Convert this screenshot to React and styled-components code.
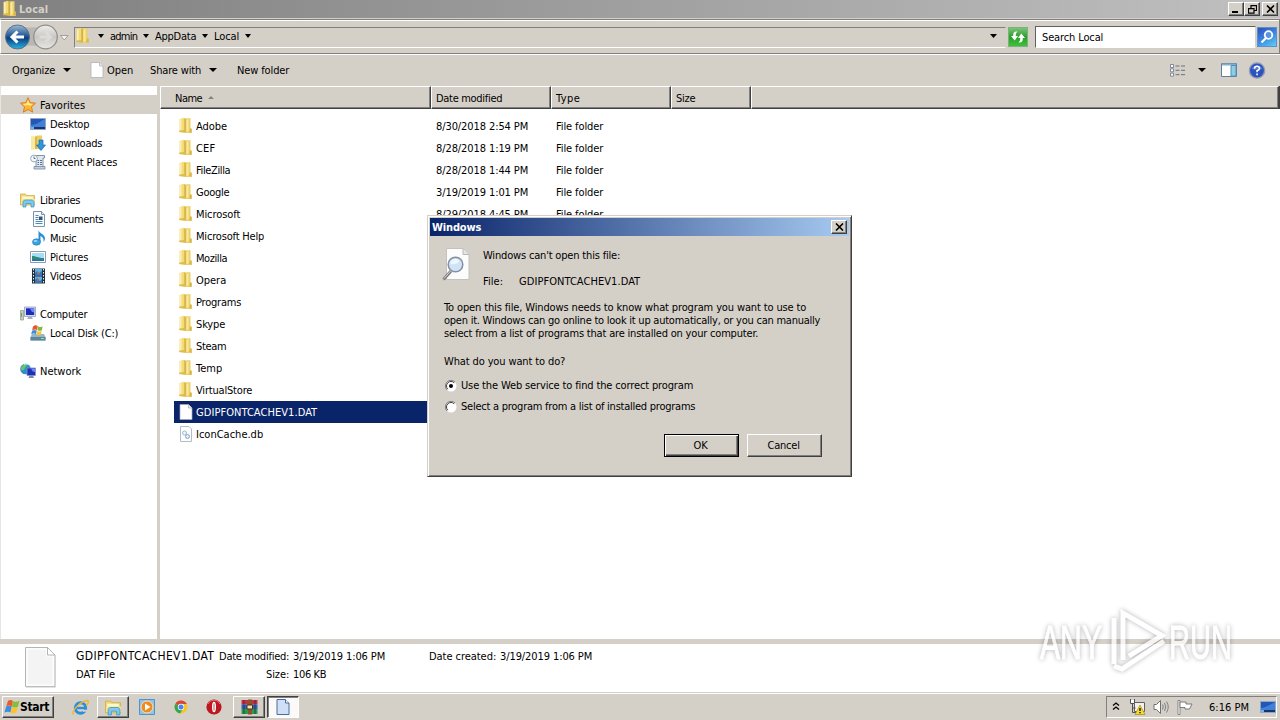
import React, { useLayoutEffect, useRef, useState } from 'react';
import styled, { createGlobalStyle, css } from 'styled-components';

//  STYLE
const GlobalStyle = createGlobalStyle`
  * {
    box-sizing: border-box;
  }
  body {
    margin: 0;
    overflow: hidden;
    background: #d4d0c8;
    color: #000;
    font-family: 'DejaVu Sans Condensed', 'DejaVu Sans', 'Noto Sans', sans-serif;
    font-size: 11px;
    font-stretch: condensed;
    line-height: 13px;
  }
  svg {
    display: block;
    flex: none;
  }
`;

const raised = css`
  border: 1px solid;
  border-color: #fff #404040 #404040 #fff;
  box-shadow: inset -1px -1px 0 #808080;
`;

const Desktop = styled.main`
  position: relative;
  display: flex;
  flex-direction: column;
  width: 1280px;
  height: 720px;
  overflow: hidden;
  background: #d4d0c8;
`;
const Text = styled.span`
  display: block;
  flex: none;
  white-space: pre;
  font-size: ${({ $size }) => $size || 11}px;
  font-weight: ${({ $bold }) => ($bold ? 'bold' : 'normal')};
`;
const TextSlot = styled.span`
  display: block;
  flex: none;
  width: ${({ $width }) => $width}px;
`;

const TitleBar = styled.header`
  display: flex;
  align-items: center;
  height: 18px;
  padding: 0 2px 0 2px;
  gap: 1px;
  color: #d4d0c8;
  background: linear-gradient(90deg, #808080, #c0c0c0);
`;
const TitleButtons = styled.div`
  display: flex;
  margin-left: auto;
`;
const TitleButton = styled.button`
  ${raised}
  display: flex;
  align-items: center;
  justify-content: center;
  width: 16px;
  height: 14px;
  padding: 0;
  margin-left: ${({ $gap }) => $gap || 0}px;
  color: #000;
  background: #d4d0c8;
`;

const AddressBar = styled.nav`
  display: flex;
  align-items: center;
  height: 35px;
  margin-top: 1px;
  padding: 1px 1px 0 3px;
  border: 1px solid;
  border-color: #808080 #808080 #808080 #fff;
  box-shadow: inset 0 1px 0 #fff, 0 1px 0 #fff;
`;
const NavButtons = styled.div`
  display: flex;
  align-items: center;
  width: 70px;
`;
const PathField = styled.div`
  display: flex;
  align-items: center;
  width: 932px;
  height: 21px;
  padding-bottom: 2px;
  border: 1px solid;
  border-color: #808080 #d4d0c8 #fff #808080;
`;
const Crumb = styled.div`
  display: flex;
  align-items: center;
  gap: 6px;
  margin-right: 6px;
`;
const RootArrow = styled.div`
  margin: 0 6px 0 7px;
`;
const PathArrow = styled.div`
  margin-left: auto;
  margin-right: 8px;
`;
const RefreshButton = styled.button`
  display: flex;
  align-items: center;
  justify-content: center;
  width: 20px;
  height: 20px;
  margin-left: 2px;
  padding: 0;
  border: 1px solid #7eb07c;
  background: linear-gradient(#7cc47a, #2b9d2b 50%, #3cc23a);
`;
const SearchField = styled.div`
  display: flex;
  align-items: center;
  width: 221px;
  height: 22px;
  margin-left: 7px;
  padding-left: 6px;
  border: 1px solid;
  border-color: #606060 #d4d0c8 #fff #606060;
  background: #fff;
`;
const SearchButton = styled.button`
  width: 20px;
  height: 20px;
  margin-left: 1px;
  padding: 0;
  border: 1px solid #5c8fd0;
  background: linear-gradient(150deg, #2c50b8, #3d86e0 50%, #5ad0f4);
`;

const ToolBar = styled.div`
  display: flex;
  align-items: center;
  height: 32px;
  padding: 0 14px 0 12px;
`;
const ToolItem = styled.div`
  display: flex;
  align-items: center;
  width: ${({ $width }) => $width}px;
  gap: ${({ $gap }) => $gap || 8}px;
`;
const ToolRight = styled.div`
  display: flex;
  align-items: center;
  margin-left: auto;
`;

const Body = styled.div`
  display: flex;
  height: 553px;
`;
const SideBar = styled.aside`
  width: 160px;
  padding-top: 9px;
  background: linear-gradient(90deg, #fff 156px, #d4d0c8 156px);
  border-left: 1px solid #e8e6e2;
`;
const SideRow = styled.div`
  display: flex;
  align-items: center;
  gap: 4px;
  height: 19px;
  margin-bottom: ${({ $last }) => ($last ? 19 : 0)}px;
  padding-left: ${({ $child }) => ($child ? 29 : 19)}px;
  background: ${({ $active }) => ($active ? '#d4d0c8' : 'none')};

  > ${TextSlot} {
    padding-top: 2px;
  }
`;

const FileList = styled.section`
  flex: 1;
  background: #fff;
`;
const HeaderRow = styled.div`
  display: flex;
  height: 23px;
  margin-bottom: 6px;
  border-right: 1px solid #404040;
  background: #d4d0c8;
`;
const HeaderCell = styled.div`
  display: flex;
  align-items: center;
  gap: 6px;
  width: ${({ $width }) => $width}px;
  padding-left: ${({ $pad }) => $pad || 4}px;
  border: 1px solid;
  border-color: #fff #404040 #404040 #fff;
  box-shadow: inset -1px -1px 0 #808080;

  > ${TextSlot} {
    padding-top: 1px;
  }
`;
const FileRow = styled.div`
  display: flex;
  align-items: center;
  width: 578px;
  height: 22px;
  margin-left: 14px;
  padding-left: 4px;
  color: ${({ $selected }) => ($selected ? '#fff' : '#000')};
  background: ${({ $selected }) => ($selected ? '#0a246a' : 'none')};
`;
const NameCell = styled.div`
  display: flex;
  align-items: center;
  gap: 2px;
  width: 258px;
`;
const DateCell = styled.div`
  width: 120px;
`;

const DetailsPane = styled.footer`
  display: flex;
  height: 53px;
  padding-left: 24px;
  border-top: 5px solid #d4d0c8;
  background: #fff;
`;
const DetailsText = styled.div`
  display: flex;
  flex-direction: column;
  gap: 4px;
  padding: 5px 0 0 19px;
`;
const DetailsLine = styled.div`
  display: flex;
  align-items: center;
  height: 14px;
`;
const DetailsKey = styled.div`
  display: flex;
  justify-content: flex-end;
  width: ${({ $width }) => $width}px;
  margin-right: 4px;
`;

const TaskBar = styled.footer`
  display: flex;
  align-items: center;
  height: 28px;
  margin-top: auto;
  padding: 1px 3px 0 2px;
  border-top: 1px solid #d4d0c8;
  box-shadow: inset 0 1px 0 #fff;
`;
const StartButton = styled.button`
  ${raised}
  display: flex;
  align-items: center;
  width: 52px;
  height: 22px;
  padding: 0 0 0 1px;
  gap: 0;
  color: #000;
  font-family: inherit;
  background: #d4d0c8;
`;
const TaskItem = styled.div`
  display: flex;
  align-items: center;
  justify-content: center;
  width: 32px;
  height: 22px;
  margin-left: ${({ $gap }) => $gap || 0}px;
  ${({ $open }) => $open && raised}
  ${({ $active }) =>
    $active &&
    css`
      border: 1px solid;
      border-color: #404040 #fff #fff #404040;
      box-shadow: inset 1px 1px 0 #808080;
      background: #fbfaf9;
    `}
`;
const Tray = styled.div`
  display: flex;
  align-items: center;
  width: 171px;
  height: 22px;
  margin-left: auto;
  padding-left: 5px;
  border: 1px solid;
  border-color: #808080 #fff #fff #808080;
`;
const TrayIcon = styled.div`
  width: ${({ $width }) => $width}px;
`;
const TrayDesktop = styled.div`
  margin-left: 11px;
`;

const Dialog = styled.section`
  position: absolute;
  left: 427px;
  top: 215px;
  width: 425px;
  height: 262px;
  padding: 2px;
  border: 1px solid;
  border-color: #d4d0c8 #404040 #404040 #d4d0c8;
  box-shadow: inset 1px 1px 0 #fff, inset -1px -1px 0 #808080;
  background: #d4d0c8;
`;
const DialogTitle = styled.header`
  display: flex;
  align-items: center;
  justify-content: space-between;
  height: 18px;
  padding: 0 2px;
  color: #fff;
  background: linear-gradient(90deg, #0a246a, #a6caf0);
`;
const DialogBody = styled.div`
  display: flex;
  flex-direction: column;
  padding: 11px 27px 0 14px;
`;
const FileInfo = styled.div`
  display: flex;
  height: 54px;
  margin-left: -2px;
`;
const FileInfoText = styled.div`
  display: flex;
  flex-direction: column;
  gap: 13px;
  padding: 2px 0 0 10px;
`;
const FileLine = styled.div`
  display: flex;
`;
const Question = styled.div`
  margin: 15px 0 7px;
`;
const Option = styled.label`
  display: flex;
  align-items: center;
  gap: 4px;
  height: 21px;
  padding-left: 1px;
`;
const Actions = styled.div`
  display: flex;
  justify-content: flex-end;
  gap: 8px;
  margin-top: 17px;
`;
const ActionButton = styled.button`
  display: flex;
  align-items: center;
  justify-content: center;
  width: 75px;
  height: 23px;
  padding: 0 2px 0 0;
  color: #000;
  font-family: inherit;
  background: #d4d0c8;
  border: 1px solid;
  border-color: ${({ $primary }) =>
    $primary ? '#000' : '#fff #404040 #404040 #fff'};
  box-shadow: ${({ $primary }) =>
    $primary
      ? 'inset 1px 1px 0 #fff, inset -1px -1px 0 #404040, inset -2px -2px 0 #808080'
      : 'inset -1px -1px 0 #808080'};
`;
const Watermark = styled.svg`
  position: absolute;
  left: 1030px;
  top: 600px;
  overflow: visible;
`;

//  Spreads a label over a fixed width by its letter spacing
const Label = ({ children, w, size, bold }) => {
  const ref = useRef(null);
  const [spacing, setSpacing] = useState(0);

  useLayoutEffect(() => {
    const range = document.createRange();
    range.selectNodeContents(ref.current);
    const natural = range.getBoundingClientRect().width;
    setSpacing((w + 0.2 - natural) / children.length);
  }, []);

  return (
    <TextSlot $width={w}>
      <Text
        ref={ref}
        $size={size}
        $bold={bold}
        style={{ letterSpacing: `${spacing}px` }}
      >
        {children}
      </Text>
    </TextSlot>
  );
};

//  ICONS
const Arrow = ({ width = 7 }) => (
  <svg width={width} height='4' viewBox='0 0 8 4' preserveAspectRatio='none'>
    <path d='M0 0h8L4 4z' />
  </svg>
);

const FolderIcon = () => (
  <svg width='16' height='18' viewBox='0 0 16 18'>
    <path d='M1.500 2L6 .8v13.500l-4.500 1z' fill='#f3dc78' />
    <path d='M2 2.400l1.500-.4v12l-1.500.4z' fill='#faefb4' />
    <path d='M6 .8l1.500 1V16L1 15l.5-1.500L6 13z' fill='#dfbd4c' />
    <path d='M7.500 1.200h5V11l1.200 1v4H7.500z' fill='#ecd068' />
    <path d='M8.500 3L10.500 1.800v12.500l-2 .9z' fill='#f8e99c' />
    <path d='M12.500 11l1.200 1v4L11 15z' fill='#d9b747' />
    <path d='M7.500 2v13.500' stroke='#cba73c' strokeWidth='.7' />
  </svg>
);

const PageIcon = () => (
  <svg width='16' height='16' viewBox='0 0 16 16'>
    <path d='M2 .5h8.500L14 4v11.500H2z' fill='#fff' stroke='#a3abb3' strokeWidth='.7' />
    <path d='M10.500.5V4H14' fill='#e9edf0' stroke='#a3abb3' strokeWidth='.7' />
  </svg>
);

const CacheIcon = () => (
  <svg width='16' height='16' viewBox='0 0 16 16'>
    <path d='M2.500.5H11L13.500 3v12.500h-11z' fill='#fff' stroke='#b4bcc6' />
    <circle cx='6.500' cy='7' r='2' fill='#eef5fc' stroke='#9dbbd9' />
    <circle cx='9.500' cy='10.500' r='2' fill='#e2eefa' stroke='#7fa8d3' />
  </svg>
);

const LibraryIcon = ({ size = 16 }) => (
  <svg width={size} height={size} viewBox='0 0 16 16'>
    <path d='M.5 2h5l1 1.500h8V13H.5z' fill='#f3d873' stroke='#c9a83e' strokeWidth='.7' />
    <path d='M2 4.500h11v3H2z' fill='#fdf6c8' />
    <path d='M1 7h14v5H1z' fill='#f7e58d' />
    <path d='M3 15V9.500l1.500-1.500h8L14 9.500V15h-3v-3.500H6V15z' fill='#7ccaf0' stroke='#3b8fc0' strokeWidth='.7' />
  </svg>
);

const ScreenIcon = () => (
  <svg width='16' height='16' viewBox='0 0 16 16'>
    <path d='M.5 2.500h15v11H.5z' fill='#2456b4' stroke='#8fa6c6' />
    <path d='M1 9C6 9 9 6 15 3v8H1z' fill='#3f80da' />
    <path d='M1 11h14v2H1z' fill='#1c3465' />
    <path d='M1 11h3v2H1z' fill='#6fb0f0' />
  </svg>
);

const icons = {
  star: (
    <svg width='16' height='16' viewBox='0 0 16 16'>
      <path
        d='M8 .7l2.200 4.900 5.300.6-4 3.600 1.200 5.400L8 12.500l-4.700 2.700 1.200-5.400-4-3.600 5.300-.6z'
        fill='#fdb62f'
        stroke='#d8781a'
        strokeWidth='.9'
      />
      <path d='M8 3l1.500 3.500 3.500.4-3 2L8 8l-3.500.5L3 7l3.500-.5z' fill='#ffe98b' />
    </svg>
  ),
  desktop: <ScreenIcon />,
  downloads: (
    <svg width='16' height='16' viewBox='0 0 16 16'>
      <path d='M1 1.500L7 .5V14l-6 1z' fill='#f9eaa0' />
      <path d='M7 .5h5V15l-5-1z' fill='#e9ce66' />
      <path d='M5 2l2-1v13H5z' fill='#d6b74c' />
      <path d='M9 5h4v5h2.500L11 15.500 6.500 10H9z' fill='#2f96e0' stroke='#1767ae' strokeWidth='.7' />
    </svg>
  ),
  recent: (
    <svg width='16' height='16' viewBox='0 0 16 16'>
      <path d='M5 1.500h9.500V4H13v9.500H6V4' fill='#dfe7ef' stroke='#7488a0' strokeWidth='.9' />
      <path d='M4 12.500h11V15H4z' fill='#c3d0dd' stroke='#7488a0' strokeWidth='.8' />
      <circle cx='4' cy='4.500' r='3.400' fill='#f6f9fc' stroke='#8496a8' strokeWidth='.8' />
      <path d='M4 2.500v2h1.500M7.500 6.500H9M10 6.500h2M7.500 8.500H9M10 8.500h2M7.500 10.500H9M10 10.500h2' stroke='#4a6684' strokeWidth='.9' fill='none' />
    </svg>
  ),
  libraries: <LibraryIcon />,
  documents: (
    <svg width='16' height='16' viewBox='0 0 16 16'>
      <path d='M3.500.5h8l3 3v12h-11z' fill='#f7fbfe' stroke='#7c93aa' />
      <path d='M5.500 4.500h3M5.500 6.500h3M5.500 8.500h3M5.500 10.500h7M5.500 12.500h7' stroke='#5588b8' />
      <path d='M9 5.500h3.500V9H9z' fill='#31557c' />
      <path d='M11.500.5v3h3' fill='#dde7f0' stroke='#7c93aa' />
    </svg>
  ),
  music: (
    <svg width='16' height='16' viewBox='0 0 16 16'>
      <path d='M8.500 0c.5 3.500 6.500 4 6.500 8.500 0 1.500-.7 2.800-1.500 3.500.6-3.500-1-5-3-6V12h-2z' fill='#2a8fd2' />
      <ellipse cx='6.500' cy='12' rx='4' ry='3.200' fill='#38a3e2' stroke='#1c75b5' strokeWidth='.6' />
      <ellipse cx='5.500' cy='11' rx='1.900' ry='1.100' fill='#9ad8f7' />
    </svg>
  ),
  pictures: (
    <svg width='16' height='16' viewBox='0 0 16 16'>
      <path d='M.5 2.500h15v11H.5z' fill='#fff' stroke='#8a9cae' />
      <path d='M2 4h12v8H2z' fill='#a6dcf4' />
      <path d='M2 7c4 0 6 2 12 2v3H2z' fill='#2f8a78' />
      <path d='M2 10.500h12V12H2z' fill='#2c6eb0' />
    </svg>
  ),
  videos: (
    <svg width='16' height='16' viewBox='0 0 16 16'>
      <path d='M2 .5h13v15H2z' fill='#20303e' />
      <path d='M5 1h7v6.500H5zM5 8.500h7V15H5z' fill='#5eb2e6' />
      <path d='M5 5l2-2 2 2 3-2v4.500H5zM5 12l2-2 3 3 2-2v4H5z' fill='#3a74b4' />
      <path d='M7 3l3 2-2 2zM8 10l2 2-3 1z' fill='#cf6d55' />
      <path d='M3.500 1v14M13.500 1v14' stroke='#e4ecf2' strokeDasharray='1.500 1.500' />
    </svg>
  ),
  computer: (
    <svg width='16' height='16' viewBox='0 0 16 16'>
      <path d='M.5 4.500h3V14h-3z' fill='#c4ccc0' stroke='#8a958a' strokeWidth='.7' />
      <path d='M1.500 7v4' stroke='#5ba85b' />
      <path d='M4.500 1h11v9.500h-11z' fill='#d7dce8' stroke='#8993ae' strokeWidth='.7' />
      <path d='M6 2.300h8.200V9H6z' fill='#1a2bc0' />
      <path d='M10 2.300h4.200V6C13 7 11 6 10 2.300z' fill='#6e86f0' />
      <path d='M8.500 10.500h3l1.500 2.500H7z' fill='#a7afc2' />
    </svg>
  ),
  disk: (
    <svg width='16' height='16' viewBox='0 0 16 16'>
      <path d='M2 9h12l1.500 3v3.500H.5V12z' fill='#9db4c4' />
      <path d='M.5 12h15v3.500H.5z' fill='#5d87a0' />
      <path d='M11 13.500h3' stroke='#7df07d' />
      <path d='M3 1.500c2-1.500 3-1.500 4.800-.5L7 5C5.500 4 4 4.500 2.200 5.300z' fill='#e8562a' />
      <path d='M8.200 1.500c1.500.8 3 .8 4.500-.3l-.8 4C10.500 6 9 6 7.400 5.300z' fill='#7ebb3e' />
      <path d='M2 5.800c2-1 3-1 4.800-.2L6 9.300c-1.500-1-3-.8-4.800 0z' fill='#3e8fd8' />
      <path d='M7.200 6c1.500.8 3 .8 4.500-.3L11 9.500c-2 .8-3 .8-4.600 0z' fill='#f9c52e' />
    </svg>
  ),
  network: (
    <svg width='16' height='16' viewBox='0 0 16 16'>
      <circle cx='5.500' cy='6' r='5.300' fill='#2b8fc8' />
      <path d='M2 3c2-2 4-2 5-1.500C7 4 5 4 4.500 6 4 8 2 7 1 7c0-2 0-3 1-4z' fill='#6cc46a' />
      <path d='M4 1.500c2-1 4-.5 5 .5' stroke='#cdeffc' fill='none' />
      <path d='M7 5h8.500v7.500H7z' fill='#1d30bd' stroke='#8793bb' strokeWidth='.8' />
      <path d='M11 5.500h4V9c-2 0-3-1-4-3.500z' fill='#6e88ef' />
      <path d='M9.500 12.500h3.500l1 2.500H8.500z' fill='#7e8aa8' />
    </svg>
  ),
};

const Flag = () => (
  <svg width='16' height='16' viewBox='0 0 16 16'>
    <path d='M4 1.800c2-1.200 3.500-1 4.900.1L7.800 7.400C6 6.300 4 6.300 2.300 7.200z' fill='#ea5b2c' />
    <path d='M9.100 2.200c2 1 4 .8 6.400-.5L14 7.700c-2 1-4 1-6.100 0z' fill='#85bd3d' />
    <path d='M2.100 7.500c2-1 4-1 5.600.2L6.400 13.500c-1.200-1-3.500-1-5.900 0z' fill='#3f8de0' />
    <path d='M7.900 8c2 1 4 .9 6 0l-1.400 5.600c-2 1-4 1-5.900.2z' fill='#fbc32d' />
  </svg>
);

const CloseGlyph = () => (
  <svg width='9' height='8' viewBox='0 0 9 8'>
    <path d='M1 .5l7 7M8 .5l-7 7' stroke='#000' strokeWidth='1.600' />
  </svg>
);

const Radio = ({ checked }) => (
  <svg width='12' height='12' viewBox='0 0 12 12'>
    <circle cx='6' cy='6' r='5.500' fill='#fff' />
    <path d='M2 10A5.500 5.500 0 0 1 10 2' stroke='#808080' fill='none' />
    <path d='M2.800 9.200A4.500 4.500 0 0 1 9.200 2.800' stroke='#404040' fill='none' />
    {checked && <circle cx='6' cy='6' r='2' fill='#000' />}
  </svg>
);

//  DATA
const tree = [
  { icon: 'star', text: 'Favorites', w: 45, active: true },
  { icon: 'desktop', text: 'Desktop', w: 39, child: true },
  { icon: 'downloads', text: 'Downloads', w: 52, child: true },
  { icon: 'recent', text: 'Recent Places', w: 67, child: true, last: true },
  { icon: 'libraries', text: 'Libraries', w: 40 },
  { icon: 'documents', text: 'Documents', w: 53, child: true },
  { icon: 'music', text: 'Music', w: 26, child: true },
  { icon: 'pictures', text: 'Pictures', w: 38, child: true },
  { icon: 'videos', text: 'Videos', w: 31, child: true, last: true },
  { icon: 'computer', text: 'Computer', w: 47 },
  { icon: 'disk', text: 'Local Disk (C:)', w: 68, child: true, last: true },
  { icon: 'network', text: 'Network', w: 41 },
];

const files = [
  { name: 'Adobe', w: 31, date: '8/30/2018 2:54 PM' },
  { name: 'CEF', w: 19, date: '8/28/2018 1:19 PM' },
  { name: 'FileZilla', w: 34, date: '8/28/2018 1:44 PM' },
  { name: 'Google', w: 33, date: '3/19/2019 1:01 PM' },
  { name: 'Microsoft', w: 44, date: '8/29/2018 4:45 PM' },
  { name: 'Microsoft Help', w: 68 },
  { name: 'Mozilla', w: 31 },
  { name: 'Opera', w: 30 },
  { name: 'Programs', w: 45 },
  { name: 'Skype', w: 29 },
  { name: 'Steam', w: 30 },
  { name: 'Temp', w: 26 },
  { name: 'VirtualStore', w: 56 },
  { name: 'GDIPFONTCACHEV1.DAT', w: 121, icon: <PageIcon />, selected: true },
  { name: 'IconCache.db', w: 67, icon: <CacheIcon /> },
];

const crumbs = [
  { text: 'admin', w: 27 },
  { text: 'AppData', w: 41 },
  { text: 'Local', w: 25 },
];

//  SECTIONS
const Navigation = () => (
  <AddressBar>
    <NavButtons>
      <svg width='66' height='28' viewBox='0 0 66 28'>
        <defs>
          <linearGradient id='back' x1='0' y1='0' x2='0' y2='1'>
            <stop offset='0' stopColor='#9db9d3' />
            <stop offset='.45' stopColor='#245a94' />
            <stop offset='.55' stopColor='#0b3f7c' />
            <stop offset='1' stopColor='#25b5ea' />
          </linearGradient>
          <linearGradient id='forward' x1='0' y1='0' x2='0' y2='1'>
            <stop offset='0' stopColor='#efeeec' />
            <stop offset='.5' stopColor='#c9c7c3' />
            <stop offset='1' stopColor='#e8e7e4' />
          </linearGradient>
        </defs>
        <path d='M10 3Q27 6 44 3v21Q27 21 10 24z' fill='#b9b7b3' />
        <circle cx='13.500' cy='14' r='12' fill='url(#back)' stroke='#5b7187' />
        <path d='M13.500 8.500L8 14l5.500 5.500M8.500 14H20' stroke='#fff' strokeWidth='3' fill='none' />
        <circle cx='41.500' cy='14' r='11.800' fill='url(#forward)' stroke='#92908c' strokeWidth='1.300' />
        <path d='M41.500 9l5 5-5 5M35.500 14H46' stroke='#dddbd7' strokeWidth='3' fill='none' />
        <path d='M56.500 12.500h7.500l-3.700 4.500z' fill='#f4f3f1' stroke='#908e8a' strokeWidth='.8' />
      </svg>
    </NavButtons>
    <PathField>
      <FolderIcon />
      <RootArrow>
        <Arrow width={6} />
      </RootArrow>
      {crumbs.map(({ text, w }) => (
        <Crumb key={text}>
          <Label w={w}>{text}</Label>
          <Arrow width={6} />
        </Crumb>
      ))}
      <PathArrow>
        <Arrow />
      </PathArrow>
    </PathField>
    <RefreshButton>
      <svg width='18' height='16' viewBox='0 0 18 16'>
        <path d='M8.500 2.500C5 2 4 4 4.200 7H2l3.700 4.500L9 7H6.800C6.700 5 7 4 8.500 2.500z' fill='#fff' />
        <path d='M9.500 13.500c3.500.5 4.500-1.500 4.300-4.500H16l-3.700-4.500L9 9h2.200c.1 2-.2 3-1.700 4.500z' fill='#fff' />
      </svg>
    </RefreshButton>
    <SearchField>
      <Label w={61}>Search Local</Label>
    </SearchField>
    <SearchButton>
      <svg width='18' height='18' viewBox='0 0 18 18'>
        <circle cx='10.500' cy='7' r='3.800' fill='#5b95e2' stroke='#fff' strokeWidth='1.800' />
        <path d='M8 10l-4.500 4.500' stroke='#fff' strokeWidth='2.200' />
      </svg>
    </SearchButton>
  </AddressBar>
);

const Tools = () => (
  <ToolBar>
    <ToolItem $width={77}>
      <Label w={43}>Organize</Label>
      <Arrow width={8} />
    </ToolItem>
    <ToolItem $width={61} $gap={2}>
      <PageIcon />
      <Label w={26}>Open</Label>
    </ToolItem>
    <ToolItem $width={87}>
      <Label w={51}>Share with</Label>
      <Arrow width={8} />
    </ToolItem>
    <Label w={52}>New folder</Label>
    <ToolRight>
      <ToolItem $width={51} $gap={12}>
        <svg width='16' height='13' viewBox='0 0 16 13'>
          <path d='M.5.500h3v3h-3zM.5 4.800h3v3h-3zM.5 9.200h3v3h-3z' fill='#fff' stroke='#7d8894' />
          <path d='M5.500 2h4M11 2h4M5.500 6.300h4M11 6.300h4M5.500 10.700h4M11 10.700h4' stroke='#68717c' />
        </svg>
        <Arrow width={8} />
      </ToolItem>
      <ToolItem $width={27}>
        <svg width='16' height='14' viewBox='0 0 16 14'>
          <path d='M.5.500h15v13H.5z' fill='#fff' stroke='#5f809c' />
          <path d='M1 1.500h14' stroke='#86acc8' strokeWidth='2' />
          <path d='M10 2.500h5V13h-5z' fill='#93cbe6' stroke='#4a92b8' />
        </svg>
      </ToolItem>
      <svg width='18' height='17' viewBox='0 0 18 17'>
        <circle cx='9' cy='8.500' r='7.600' fill='#2b52bd' stroke='#8f9bb8' strokeWidth='1.400' />
        <path d='M3.500 7a6 6 0 0 1 11 0q-5 2-11 0z' fill='#5377d4' />
        <path d='M6.500 6.700q0-2.400 2.500-2.400t2.500 2.200Q11.500 8 9.100 8.700v1.500M9.100 11.500v1.800' stroke='#fff' strokeWidth='1.600' fill='none' />
      </svg>
    </ToolRight>
  </ToolBar>
);

const Files = () => (
  <FileList>
    <HeaderRow>
      <HeaderCell $width={271} $pad={14}>
        <Label w={27}>Name</Label>
        <svg width='6' height='4' viewBox='0 0 6 4'>
          <path d='M0 3l3-3 3 3z' fill='#848284' />
        </svg>
      </HeaderCell>
      <HeaderCell $width={120}>
        <Label w={66}>Date modified</Label>
      </HeaderCell>
      <HeaderCell $width={120}>
        <Label w={24}>Type</Label>
      </HeaderCell>
      <HeaderCell $width={80}>
        <Label w={19}>Size</Label>
      </HeaderCell>
      <HeaderCell $width={528} />
    </HeaderRow>
    {files.map(({ name, w, date, icon, selected }) => (
      <FileRow key={name} $selected={selected}>
        <NameCell>
          {icon || <FolderIcon />}
          <Label w={w}>{name}</Label>
        </NameCell>
        {date && (
          <>
            <DateCell>
              <Label w={92}>{date}</Label>
            </DateCell>
            <Label w={47}>File folder</Label>
          </>
        )}
      </FileRow>
    ))}
  </FileList>
);

const Details = () => (
  <DetailsPane>
    <svg width='33' height='44' viewBox='0 -2 33 44'>
      <path d='M1.500 1.500h22l7.500 7.500v31.500H1.500z' fill='#f8f8f8' stroke='#b4b4b4' />
      <path d='M3 3h19.500v7H29v29H3z' fill='#f4f4f4' stroke='#fff' />
      <path d='M23.500 1.500V9H31z' fill='#fff' stroke='#b4b4b4' />
      <path d='M2 41.200h29.500V10' stroke='#d5d5d5' fill='none' />
    </svg>
    <DetailsText>
      <DetailsLine>
        <Label w={138} size={12}>
          GDIPFONTCACHEV1.DAT
        </Label>
        <DetailsKey $width={75}>
          <Label w={70}>Date modified:</Label>
        </DetailsKey>
        <Label w={92}>3/19/2019 1:06 PM</Label>
        <DetailsKey $width={111}>
          <Label w={67}>Date created:</Label>
        </DetailsKey>
        <Label w={92}>3/19/2019 1:06 PM</Label>
      </DetailsLine>
      <DetailsLine>
        <Label w={39}>DAT File</Label>
        <DetailsKey $width={174}>
          <Label w={23}>Size:</Label>
        </DetailsKey>
        <Label w={33}>106 KB</Label>
      </DetailsLine>
    </DetailsText>
  </DetailsPane>
);

const Tasks = () => (
  <TaskBar>
    <StartButton>
      <Flag />
      <Label w={29} size={12} bold>
        Start
      </Label>
    </StartButton>
    <TaskItem $gap={10}>
      <svg width='17' height='17' viewBox='0 0 17 17'>
        <circle cx='8.500' cy='9' r='5.200' fill='none' stroke='#2d8fda' strokeWidth='3' />
        <path d='M5 9h9' stroke='#2d8fda' strokeWidth='2.400' />
        <path d='M10 10.800h6v2h-5z' fill='#d4d0c8' />
        <path d='M1.500 15.500C-1 12 9 2 15.500 1.500c2 1 0 4-1 5' stroke='#f2b72b' strokeWidth='1.400' fill='none' />
      </svg>
    </TaskItem>
    <TaskItem $gap={1} $open>
      <LibraryIcon size={17} />
    </TaskItem>
    <TaskItem $gap={2}>
      <svg width='16' height='16' viewBox='0 0 16 16'>
        <path d='M.5.500h15v15H.5z' fill='#8cc4ec' stroke='#4d94c9' />
        <circle cx='8' cy='8' r='6' fill='#f28a1c' stroke='#fde0b2' />
        <path d='M6 4.500v7l5.500-3.500z' fill='#fff' />
      </svg>
    </TaskItem>
    <TaskItem $gap={2}>
      <svg width='14' height='14' viewBox='0 0 14 14'>
        <circle cx='7' cy='7' r='6.500' fill='#f6c526' />
        <path d='M7 7L1.400 3.700A6.500 6.500 0 0 1 12.800 4H7z' fill='#dc4437' />
        <path d='M7 7L1.400 3.700A6.500 6.500 0 0 0 6 13.400L9 9z' fill='#35a556' />
        <circle cx='7' cy='7' r='3.200' fill='#fff' />
        <circle cx='7' cy='7' r='2.500' fill='#4686ee' />
      </svg>
    </TaskItem>
    <TaskItem $gap={1}>
      <svg width='16' height='16' viewBox='0 0 16 16'>
        <circle cx='8' cy='8' r='7.600' fill='#bd1720' />
        <path d='M2 5a6.500 6.500 0 0 1 12 0' stroke='#ea7377' fill='none' />
        <ellipse cx='8' cy='8' rx='2' ry='5.300' fill='#fff' />
        <ellipse cx='8' cy='8' rx='.4' ry='4' fill='#a5222a' />
      </svg>
    </TaskItem>
    <TaskItem $gap={3} $open>
      <svg width='17' height='16' viewBox='0 0 17 16'>
        <path d='M.5 1h16v4.500H.5z' fill='#c2323f' />
        <path d='M.5 5.500h16V10H.5z' fill='#2f5fc0' />
        <path d='M.5 10h16v5H.5z' fill='#2c9a48' />
        <path d='M7 .5h4v15H7z' fill='#8d5130' />
        <path d='M6 6h5.500v4H6z' fill='#f2e2aa' stroke='#4b3018' />
        <path d='M3 1v14M14 1v14' stroke='#2a2440' strokeWidth='.7' />
      </svg>
    </TaskItem>
    <TaskItem $gap={2} $active>
      <svg width='14' height='16' viewBox='0 0 14 16'>
        <path d='M1 .5h8.500L13 4v11.500H1z' fill='#cfe0f6' stroke='#4a6ca0' />
        <path d='M9.500.5V4H13' fill='#fff' stroke='#4a6ca0' />
      </svg>
    </TaskItem>
    <Tray>
      <TrayIcon $width={17}>
        <svg width='8' height='11' viewBox='0 0 8 11'>
          <path d='M1 3.500l3-2.500 3 2.500M1 7.500L4 5l3 2.500' stroke='#000' strokeWidth='1.300' fill='none' />
        </svg>
      </TrayIcon>
      <TrayIcon $width={24}>
        <svg width='17' height='16' viewBox='0 0 17 16'>
          <path d='M5.500 3.500h10v9h-10z' fill='#f2f2f2' stroke='#606060' />
          <path d='M1 1h5v4H1z' fill='#fff' />
          <path d='M1.500 0v4.500h4V0M3.500 4.500v9h6M3.500 9h3' stroke='#505050' fill='none' />
          <path d='M11 6l5 9.500H6z' fill='#f7dc2b' stroke='#a58a12' strokeWidth='.7' />
          <path d='M11 9v3M11 13v1.300' stroke='#000' strokeWidth='1.300' />
        </svg>
      </TrayIcon>
      <TrayIcon $width={24}>
        <svg width='18' height='16' viewBox='0 0 18 16'>
          <path d='M1 5.500h2.500l4-4v13l-4-4H1z' fill='#fff' stroke='#707070' />
          <path d='M9.500 5.500q1.500 2.500 0 5M11.500 4q2.500 4 0 8M13.500 2.500q3.500 5.500 0 11' stroke='#808080' fill='none' />
        </svg>
      </TrayIcon>
      <TrayIcon $width={32}>
        <svg width='16' height='15' viewBox='0 0 16 15'>
          <path d='M1 .5h2V14.500H1z' fill='#fff' stroke='#707070' strokeWidth='.8' />
          <path d='M3 2h6v2h6l-2.500 5H8V7.500H3z' fill='#fff' stroke='#707070' strokeWidth='.9' />
        </svg>
      </TrayIcon>
      <Label w={40}>6:16 PM</Label>
      <TrayDesktop>
        <ScreenIcon />
      </TrayDesktop>
    </Tray>
  </TaskBar>
);

const OpenDialog = () => (
  <Dialog>
    <DialogTitle>
      <Label w={49} bold>
        Windows
      </Label>
      <TitleButton>
        <CloseGlyph />
      </TitleButton>
    </DialogTitle>
    <DialogBody>
      <FileInfo>
        <svg width='31' height='36' viewBox='0 0 31 36'>
          <path d='M4.500 1.500H21l6 6v25H4.500z' fill='#fcfcfc' stroke='#c4c2be' />
          <path d='M21 1.500v6h6' fill='#e4e4e4' stroke='#b8b8b8' />
          <path d='M9 24l-7.500 8.500' stroke='#7d7d80' strokeWidth='3' />
          <path d='M9 23.500L2 31.500' stroke='#d4d4d8' />
          <circle cx='13.500' cy='17.500' r='7.300' fill='#cfe3f8' stroke='#84909e' strokeWidth='1.500' />
          <path d='M8.500 17a5 5 0 0 1 9-3q-3 4-9 3z' fill='#eff7fe' />
        </svg>
        <FileInfoText>
          <Label w={137}>Windows can't open this file:</Label>
          <FileLine>
            <TextSlot $width={36}>
              <Label w={20}>File:</Label>
            </TextSlot>
            <Label w={121}>GDIPFONTCACHEV1.DAT</Label>
          </FileLine>
        </FileInfoText>
      </FileInfo>
      <Label w={362}>
        To open this file, Windows needs to know what program you want to use to
      </Label>
      <Label w={376}>
        open it. Windows can go online to look it up automatically, or you can manually
      </Label>
      <Label w={314}>
        select from a list of programs that are installed on your computer.
      </Label>
      <Question>
        <Label w={121}>What do you want to do?</Label>
      </Question>
      <Option>
        <Radio checked />
        <Label w={232}>Use the Web service to find the correct program</Label>
      </Option>
      <Option>
        <Radio />
        <Label w={234}>Select a program from a list of installed programs</Label>
      </Option>
      <Actions>
        <ActionButton $primary>
          <Label w={14}>OK</Label>
        </ActionButton>
        <ActionButton>
          <Label w={32}>Cancel</Label>
        </ActionButton>
      </Actions>
    </DialogBody>
  </Dialog>
);

const Brand = () => (
  <Watermark width='220' height='84' viewBox='0 0 220 84'>
    <g filter='drop-shadow(0 0 2.500px rgba(0, 0, 0, .4))' opacity='.75'>
      <g
        fill='#fff'
        stroke='#fff'
        fontFamily='Liberation Sans Narrow, Liberation Sans, sans-serif'
        fontSize='49'
      >
        <text x='10' y='59' textLength='62' lengthAdjust='spacingAndGlyphs'>
          ANY
        </text>
        <text x='139' y='59' textLength='63' lengthAdjust='spacingAndGlyphs'>
          RUN
        </text>
      </g>
      <path
        d='M93 60V13l39 22.500L99 56M84 18v46M84 66l8 3 42-28'
        fill='none'
        stroke='#fff'
        strokeWidth='5'
      />
    </g>
  </Watermark>
);

//  MAIN
const App = () => (
  <Desktop>
    <GlobalStyle />
    <TitleBar>
      <FolderIcon />
      <Label w={29} bold>
        Local
      </Label>
      <TitleButtons>
        <TitleButton>
          <svg width='8' height='8'>
            <path d='M0 6h6v2H0z' />
          </svg>
        </TitleButton>
        <TitleButton>
          <svg width='9' height='9' viewBox='0 0 9 9'>
            <path d='M3 3V.7h5.500V5.500H6.500M.5 3.700h5.500v4.500H.5z' stroke='#000' strokeWidth='1.200' fill='none' />
          </svg>
        </TitleButton>
        <TitleButton $gap={2}>
          <CloseGlyph />
        </TitleButton>
      </TitleButtons>
    </TitleBar>
    <Navigation />
    <Tools />
    <Body>
      <SideBar>
        {tree.map(({ icon, text, w, active, child, last }) => (
          <SideRow key={text} $active={active} $child={child} $last={last}>
            {icons[icon]}
            <Label w={w}>{text}</Label>
          </SideRow>
        ))}
      </SideBar>
      <Files />
    </Body>
    <Details />
    <Tasks />
    <OpenDialog />
    <Brand />
  </Desktop>
);

export default App;
